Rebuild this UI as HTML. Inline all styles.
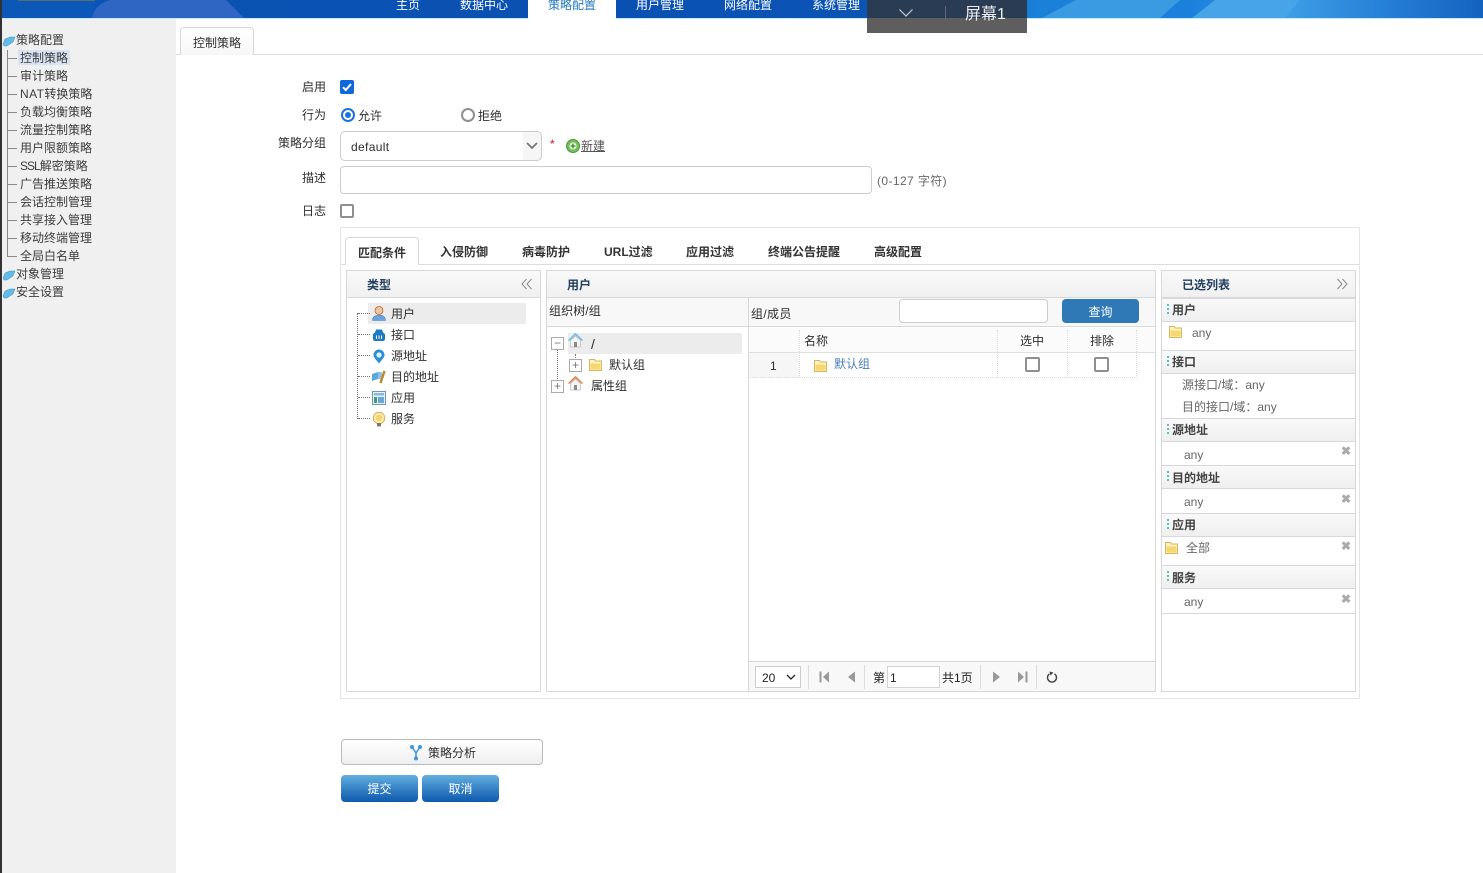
<!DOCTYPE html>
<html lang="zh"><head><meta charset="utf-8"><title>控制策略</title>
<style>
html,body{margin:0;padding:0;background:#fff}
body{width:1483px;height:873px;position:relative;overflow:hidden;font:12px/16px "Liberation Sans","Noto Sans CJK SC",sans-serif;color:#2e2e2e}
.a,.t{position:absolute}
.t{white-space:nowrap;line-height:16px;height:16px}
.b{box-sizing:border-box;position:absolute;border:1px solid #d8d8d8}
.nav{color:#fff;top:-3px}
.side{color:#3c3c3c;left:20px}
.hl{position:absolute;background:#888}
.tab{font-weight:700;color:#333;top:244px}
.head{background:linear-gradient(#f9f9f9,#f0f0f0);border-bottom:1px solid #d8d8d8;position:absolute;box-sizing:border-box}
.secth{position:absolute;left:1162px;width:193px;height:24px;box-sizing:border-box;background:linear-gradient(#f9f9f9,#efefef);border-top:1px solid #d8d8d8;border-bottom:1px solid #d8d8d8}
.secth span{position:absolute;left:10px;top:3px;font-weight:700;color:#444}
.secth i{position:absolute;left:5px;top:5px;width:2px;height:12px;background:repeating-linear-gradient(#5bbccb 0 2px,transparent 2px 4px)}
.ln{position:absolute;left:1162px;width:193px;height:1px;background:#d8d8d8}
.x{position:absolute;left:1341px;font-size:12px;line-height:10px;color:#aaa;font-weight:700}
.blue{position:absolute;box-sizing:border-box;height:27px;top:775px;border-radius:4px;background:linear-gradient(#62aedf,#0d59ad);color:#fff;text-align:center;line-height:28px;width:77px}
.cb{position:absolute;box-sizing:border-box;width:14px;height:14px;border:2px solid #8f8f8f;border-radius:2px;background:#fff}
.dot{position:absolute;border-color:#777;border-style:dotted;border-width:0}
.plus{position:absolute;box-sizing:border-box;width:13px;height:13px;border:1px solid #aaa;background:#fff;color:#777;font-size:12px;line-height:10px;text-align:center}
.sep{position:absolute;top:665px;width:1px;height:24px;background:#ddd}
.col{font-family:"Noto Sans CJK TC",sans-serif}
</style></head><body>

<!-- header -->
<div class="a" style="left:0;top:0;width:1483px;height:18px;background:linear-gradient(90deg,#0a55b4 0,#0a50b2 600px,#0b54b4 860px,#1a80d8 1040px,#1a80dc 1190px,#3c9de4 1290px,#2a84da 1370px,#1462c0 1483px);overflow:hidden">
<svg width="1483" height="18" style="position:absolute;left:0;top:0"><path d="M0 18V0H96L92 18Z" fill="#0c58b8"/><path d="M92 18C94 8 100 3 110 0H226L244 18Z" fill="#2f66c4"/><path d="M18 0H95V1H18Z" fill="#5a6a70"/><path d="M1042 18L1076 0H1180L1160 18Z" fill="#3a9ae2"/><path d="M1192 18L1215 0H1300L1285 18Z" fill="#48a4e8"/></svg></div>
<div class="a" style="left:0;top:18px;width:1483px;height:1px;background:#bfeefa"></div>
<div class="a" style="left:0;top:0;width:2px;height:873px;background:#333"></div>
<span class="t nav" style="left:396px">主页</span>
<span class="t nav" style="left:460px">数据中心</span>
<div class="a" style="left:528px;top:0;width:88px;height:19px;background:#fff"></div>
<span class="t nav" style="left:548px;color:#2478c0">策略配置</span>
<span class="t nav" style="left:636px">用户管理</span>
<span class="t nav" style="left:724px">网络配置</span>
<span class="t nav" style="left:812px">系统管理</span>
<div class="a" style="left:867px;top:0;width:160px;height:33px;background:#5e5e5e"></div>
<div class="a" style="left:867px;top:0;width:160px;height:18px;background:#2a3b54"></div>
<svg class="a" style="left:898px;top:8px" width="16" height="10"><path d="M1.500 1.500L8 8L14.500 1.500" fill="none" stroke="#c8ccd2" stroke-width="1.200"/></svg>
<div class="a" style="left:945px;top:6px;width:1px;height:14px;background:#667"></div>
<span class="t" style="left:965px;top:6px;font-size:16px;line-height:18px;height:18px;color:#eee">屏幕1</span>

<!-- sidebar -->
<div class="a" style="left:2px;top:19px;width:174px;height:854px;background:#f0f0f1"></div>
<svg class="a" style="left:2px;top:34px" width="14" height="280"><g fill="#62bde6" stroke="#3f8fb8" stroke-width=".5"><path d="M1 10L3 5L8 3H13L11 8L5 12H2Z"/><path d="M1 244L3 239L8 237H13L11 242L5 246H2Z"/><path d="M1 262L3 257L8 255H13L11 260L5 264H2Z"/></g></svg>
<span class="t" style="left:16px;top:32px;color:#3c3c3c">策略配置</span>
<div class="a" style="left:18px;top:50px;width:52px;height:15px;background:#d9e3f2"></div>
<div class="hl" style="left:7px;top:50px;width:1px;height:206px"></div>
<div>
<div class="hl" style="left:7px;top:58px;width:10px;height:1px"></div><div class="hl" style="left:7px;top:76px;width:10px;height:1px"></div><div class="hl" style="left:7px;top:94px;width:10px;height:1px"></div><div class="hl" style="left:7px;top:112px;width:10px;height:1px"></div><div class="hl" style="left:7px;top:130px;width:10px;height:1px"></div><div class="hl" style="left:7px;top:148px;width:10px;height:1px"></div><div class="hl" style="left:7px;top:166px;width:10px;height:1px"></div><div class="hl" style="left:7px;top:184px;width:10px;height:1px"></div><div class="hl" style="left:7px;top:202px;width:10px;height:1px"></div><div class="hl" style="left:7px;top:220px;width:10px;height:1px"></div><div class="hl" style="left:7px;top:238px;width:10px;height:1px"></div><div class="hl" style="left:7px;top:256px;width:10px;height:1px"></div>
</div>
<span class="t side" style="top:50px">控制策略</span>
<span class="t side" style="top:68px">审计策略</span>
<span class="t side" style="top:86px"><span style="letter-spacing:.4px">NAT</span>转换策略</span>
<span class="t side" style="top:104px">负载均衡策略</span>
<span class="t side" style="top:122px">流量控制策略</span>
<span class="t side" style="top:140px">用户限额策略</span>
<span class="t side" style="top:158px"><span style="letter-spacing:-1px">SSL</span>解密策略</span>
<span class="t side" style="top:176px">广告推送策略</span>
<span class="t side" style="top:194px">会话控制管理</span>
<span class="t side" style="top:212px">共享接入管理</span>
<span class="t side" style="top:230px">移动终端管理</span>
<span class="t side" style="top:248px">全局白名单</span>
<span class="t" style="left:16px;top:266px;color:#3c3c3c">对象管理</span>
<span class="t" style="left:16px;top:284px;color:#3c3c3c">安全设置</span>

<!-- page tab -->
<div class="a" style="left:176px;top:54px;width:1307px;height:1px;background:#ddd"></div>
<div class="a" style="left:180px;top:27px;width:74px;height:28px;box-sizing:border-box;border:1px solid #d8d8d8;border-bottom:0;border-radius:4px 4px 0 0;background:linear-gradient(#fff,#f7f7f7)"></div>
<span class="t" style="left:193px;top:35px">控制策略</span>

<!-- form -->
<span class="t" style="left:302px;top:79px">启用</span>
<div class="a" style="left:340px;top:80px;width:14px;height:14px;background:#0f67dc;border-radius:2px"><svg width="14" height="14"><path d="M3 7.200L5.800 10L11 4" fill="none" stroke="#fff" stroke-width="2"/></svg></div>
<span class="t" style="left:302px;top:107px">行为</span>
<div class="a" style="left:341px;top:108px;width:14px;height:14px;box-sizing:border-box;border:2px solid #1a73e0;border-radius:50%;background:#fff"><div class="a" style="left:2px;top:2px;width:6px;height:6px;border-radius:50%;background:#1a73e0"></div></div>
<span class="t" style="left:358px;top:108px">允许</span>
<div class="a" style="left:461px;top:108px;width:14px;height:14px;box-sizing:border-box;border:2px solid #8f8f8f;border-radius:50%;background:#fff"></div>
<span class="t" style="left:478px;top:108px">拒绝</span>
<span class="t" style="left:278px;top:135px">策略分组</span>
<div class="b" style="left:340px;top:131px;width:202px;height:30px;border-color:#ccc;border-radius:5px;background:linear-gradient(90deg,#fff 0 182px,#f6f6f6 182px)"></div>
<span class="t" style="left:351px;top:139px;letter-spacing:.35px">default</span>
<svg class="a" style="left:526px;top:142px" width="12" height="8"><path d="M1 1L6 6L11 1" fill="none" stroke="#777" stroke-width="1.800"/></svg>
<span class="t" style="left:550px;top:136px;color:#d0102a">*</span>
<svg class="a" style="left:566px;top:139px" width="14" height="14"><circle cx="7" cy="7" r="6.500" fill="#74bd58" stroke="#4a9a3a"/><circle cx="7" cy="7" r="3.600" fill="#f2faee"/><path d="M7 4.500v5M4.500 7h5" stroke="#4a9a3a" stroke-width="1.600"/></svg>
<span class="t" style="left:581px;top:138px;text-decoration:underline;color:#555">新建</span>
<span class="t" style="left:302px;top:170px">描述</span>
<div class="b" style="left:340px;top:166px;width:532px;height:28px;border-color:#ccc;border-radius:4px"></div>
<span class="t" style="left:877px;top:173px;color:#666;letter-spacing:.4px">(0-127 字符)</span>
<span class="t" style="left:302px;top:203px">日志</span>
<div class="cb" style="left:340px;top:204px"></div>

<!-- big panel -->
<div class="b" style="left:340px;top:227px;width:1020px;height:472px;border-color:#e4e4e4"></div>
<div class="a" style="left:341px;top:264px;width:1018px;height:1px;background:#ddd"></div>
<div class="a" style="left:345px;top:237px;width:74px;height:28px;box-sizing:border-box;border:1px solid #d8d8d8;border-bottom:0;border-radius:4px 4px 0 0;background:#fff"></div>
<span class="t tab" style="left:358px;top:245px">匹配条件</span>
<span class="t tab" style="left:440px">入侵防御</span>
<span class="t tab" style="left:522px">病毒防护</span>
<span class="t tab" style="left:604px">URL过滤</span>
<span class="t tab" style="left:686px">应用过滤</span>
<span class="t tab" style="left:768px">终端公告提醒</span>
<span class="t tab" style="left:874px">高级配置</span>

<!-- type panel -->
<div class="b" style="left:346px;top:270px;width:195px;height:422px"></div>
<div class="head" style="left:347px;top:271px;width:193px;height:27px"></div>
<span class="t" style="left:367px;top:277px;font-weight:700;color:#23405f">类型</span>
<svg class="a" style="left:521px;top:278px" width="12" height="12"><path d="M5.500 1L1 6L5.500 11M10.500 1L6 6L10.500 11" fill="none" stroke="#888" stroke-width="1"/></svg>
<div class="a" style="left:368px;top:303px;width:158px;height:21px;background:#ececec"></div>
<div class="dot" style="left:357px;top:313px;height:106px;border-left-width:1px"></div>
<div class="dot" style="left:358px;top:313px;width:12px;border-top-width:1px"></div>
<div class="dot" style="left:358px;top:334px;width:12px;border-top-width:1px"></div>
<div class="dot" style="left:358px;top:355px;width:12px;border-top-width:1px"></div>
<div class="dot" style="left:358px;top:376px;width:12px;border-top-width:1px"></div>
<div class="dot" style="left:358px;top:397px;width:12px;border-top-width:1px"></div>
<div class="dot" style="left:358px;top:418px;width:12px;border-top-width:1px"></div>
<svg class="a" style="left:372px;top:306px" width="14" height="15"><path d="M3 4.500C3 2 5 .5 7 .5S11 2 11 4.500C11 7 9 8.500 7 8.500S3 7 3 4.500Z" fill="#f0c49c" stroke="#b4693a" stroke-width=".8"/><path d="M.5 14.500C.5 10.500 4 9 7 9S13.500 10.500 13.500 14.500Z" fill="#6ca3dc" stroke="#4a7fb8" stroke-width=".6"/></svg>
<svg class="a" style="left:373px;top:329px" width="12" height="12"><path d="M3 .5H9L10 3.500C11.500 4 12 5 12 6V10C12 11 11 12 10 12H2C1 12 0 11 0 10V6C0 5 .5 4 2 3.500Z" fill="#1c7bc0"/><path d="M3.500 6.500v3.500M6 6.500v3.500M8.500 6.500v3.500" stroke="#fff"/></svg>
<svg class="a" style="left:373px;top:349px" width="12" height="15"><path d="M6 14.500C3 10.500 .5 8.500 .5 6A5.500 5.500 0 0 1 11.500 6C11.500 8.500 9 10.500 6 14.500Z" fill="#2a8fd8"/><circle cx="6" cy="6" r="2.600" fill="#e4f3fb"/></svg>
<svg class="a" style="left:372px;top:370px" width="14" height="14"><path d="M0 4L6 2V9L0 11Z" fill="#5aa8dc"/><path d="M6 2H10V9H6Z" fill="#8cc4e8"/><path d="M8.500 13L12.500 1" stroke="#b8862e" stroke-width="2.400"/></svg>
<svg class="a" style="left:372px;top:391px" width="14" height="14"><rect x=".5" y=".5" width="13" height="13" fill="#e9f2f8" stroke="#6d97b8"/><rect x="2" y="2" width="10" height="2.500" fill="#8db9d6"/><rect x="2" y="6" width="3" height="6" fill="#3f9e72"/><rect x="6" y="6" width="6" height="6" fill="#6aa7d8"/></svg>
<svg class="a" style="left:372px;top:412px" width="14" height="15"><circle cx="7" cy="6" r="5.800" fill="#fbe9a4" stroke="#c9a04c" stroke-width=".8"/><circle cx="7" cy="6" r="3" fill="#f4d36a"/><rect x="5" y="11" width="4" height="3.400" fill="#777"/></svg>
<span class="t" style="left:391px;top:306px">用户</span>
<span class="t" style="left:391px;top:327px">接口</span>
<span class="t" style="left:391px;top:348px">源地址</span>
<span class="t" style="left:391px;top:369px">目的地址</span>
<span class="t" style="left:391px;top:390px">应用</span>
<span class="t" style="left:391px;top:411px">服务</span>

<!-- user panel -->
<div class="b" style="left:546px;top:270px;width:610px;height:422px"></div>
<div class="head" style="left:547px;top:271px;width:608px;height:27px"></div>
<span class="t" style="left:567px;top:277px;font-weight:700;color:#23405f">用户</span>
<div class="a" style="left:748px;top:298px;width:1px;height:393px;background:#d8d8d8"></div>
<div class="a" style="left:547px;top:298px;width:201px;height:29px;background:#f8f8f8;border-bottom:1px solid #d8d8d8;box-sizing:border-box"></div>
<span class="t" style="left:549px;top:303px;letter-spacing:.1px">组织树/组</span>
<div class="a" style="left:749px;top:298px;width:406px;height:29px;background:#f8f8f8;border-bottom:1px solid #d8d8d8;box-sizing:border-box"></div>
<span class="t" style="left:751px;top:306px;letter-spacing:.35px">组/成员</span>
<div class="b" style="left:899px;top:299px;width:149px;height:24px;border-color:#ccc;border-radius:4px;background:#fff"></div>
<div class="a" style="left:1062px;top:299px;width:77px;height:24px;border-radius:4px;background:#2f79b7;color:#fff;text-align:center;line-height:26px">查询</div>
<!-- tree -->
<div class="a" style="left:568px;top:333px;width:174px;height:21px;background:#ececec"></div>
<div class="dot" style="left:557px;top:345px;height:36px;border-left-width:1px"></div>
<div class="dot" style="left:575px;top:354px;height:6px;border-left-width:1px"></div>
<div class="plus" style="left:551px;top:337px">−</div>
<div class="plus" style="left:569px;top:359px">+</div>
<div class="plus" style="left:551px;top:380px">+</div>
<svg class="a" style="left:568px;top:333px" width="15" height="15"><path d="M.5 7.500L7.500 .8L14.500 7.500" fill="#9fd6ef" stroke="#70bde0" stroke-width="1.400"/><path d="M2.500 7.500V14H12.500V7.500L7.500 3Z" fill="#f4f4f4" stroke="#bbb" stroke-width=".7"/><rect x="6" y="9" width="3" height="5" fill="#8a8a8a"/></svg>
<svg class="a" style="left:568px;top:376px" width="15" height="15"><path d="M.5 7.500L7.500 .8L14.500 7.500" fill="#f2a877" stroke="#d98a56" stroke-width="1.400"/><path d="M2.500 7.500V14H12.500V7.500L7.500 3Z" fill="#f4f4f4" stroke="#bbb" stroke-width=".7"/><rect x="6" y="9" width="3" height="5" fill="#8a8a8a"/></svg>
<svg class="a" style="left:589px;top:359px" width="13" height="12"><path d="M.5 .5H5.500L6.500 2H12.500V11.500H.5Z" fill="#fdf1c0" stroke="#d8b65a"/><rect x="1.500" y="4.500" width="10" height="6" fill="#f6d873"/></svg>
<span class="t" style="left:591px;top:336px;font-size:14px">/</span>
<span class="t" style="left:609px;top:357px">默认组</span>
<span class="t" style="left:591px;top:378px">属性组</span>
<!-- grid -->
<div class="a" style="left:749px;top:328px;width:406px;height:25px;background:#fbfbfb;border-bottom:1px solid #e0e0e0;box-sizing:border-box"></div>
<div class="a" style="left:749px;top:353px;width:50px;height:25px;background:#f6f6f6"></div>
<div class="a" style="left:749px;top:377px;width:388px;height:0;border-top:1px dotted #ddd"></div>
<div class="dot" style="left:799px;top:330px;height:48px;border-left-width:1px;border-color:#ddd"></div>
<div class="dot" style="left:997px;top:330px;height:48px;border-left-width:1px;border-color:#ddd"></div>
<div class="dot" style="left:1067px;top:330px;height:48px;border-left-width:1px;border-color:#ddd"></div>
<div class="dot" style="left:1136px;top:330px;height:48px;border-left-width:1px;border-color:#ddd"></div>
<span class="t" style="left:804px;top:333px">名称</span>
<span class="t" style="left:1020px;top:333px">选中</span>
<span class="t" style="left:1090px;top:333px">排除</span>
<span class="t" style="left:770px;top:358px">1</span>
<svg class="a" style="left:814px;top:360px" width="13" height="12"><path d="M.5 .5H5.500L6.500 2H12.500V11.500H.5Z" fill="#fdf1c0" stroke="#d8b65a"/><rect x="1.500" y="4.500" width="10" height="6" fill="#f6d873"/></svg>
<span class="t" style="left:834px;top:356px;color:#4a7fb5">默认组</span>
<div class="cb" style="left:1025px;top:357px;width:15px;height:15px"></div>
<div class="cb" style="left:1094px;top:357px;width:15px;height:15px"></div>
<!-- pager -->
<div class="a" style="left:749px;top:661px;width:406px;height:30px;background:#f8f8f8;border-top:1px solid #d8d8d8;box-sizing:border-box"></div>
<div class="b" style="left:755px;top:666px;width:46px;height:22px;border-color:#ccc;background:#fff"></div>
<span class="t" style="left:762px;top:670px;color:#222">20</span>
<svg class="a" style="left:786px;top:674px" width="10" height="7"><path d="M1 1L5 5L9 1" fill="none" stroke="#222" stroke-width="1.300"/></svg>
<div class="sep" style="left:808px"></div><div class="sep" style="left:864px"></div><div class="sep" style="left:980px"></div><div class="sep" style="left:1036px"></div>
<svg class="a" style="left:819px;top:671px" width="12" height="12"><path d="M1.500 .5v11" stroke="#999" stroke-width="2"/><path d="M10 .5V11.500L4 6Z" fill="#999"/></svg>
<svg class="a" style="left:845px;top:671px" width="12" height="12"><path d="M10 .5V11.500L3 6Z" fill="#999"/></svg>
<span class="t" style="left:873px;top:670px;color:#222">第</span>
<div class="b" style="left:887px;top:666px;width:53px;height:22px;border-color:#d4d4d4;background:#fff"></div>
<span class="t" style="left:890px;top:670px;color:#222">1</span>
<span class="t" style="left:942px;top:670px;color:#222">共1页</span>
<svg class="a" style="left:990px;top:671px" width="12" height="12"><path d="M3 .5V11.500L10 6Z" fill="#999"/></svg>
<svg class="a" style="left:1016px;top:671px" width="12" height="12"><path d="M2 .5V11.500L8 6Z" fill="#999"/><path d="M10.500 .5v11" stroke="#999" stroke-width="2"/></svg>
<svg class="a" style="left:1046px;top:671px" width="12" height="12"><path d="M3.500 2.800A4.500 4.500 0 1 0 8.500 2.800" fill="none" stroke="#444" stroke-width="1.400"/><path d="M3.500 .5L7.500 1.500L4.500 4.500Z" fill="#444"/></svg>

<!-- selected list -->
<div class="b" style="left:1161px;top:270px;width:195px;height:422px"></div>
<div class="head" style="left:1162px;top:271px;width:193px;height:27px"></div>
<span class="t" style="left:1182px;top:277px;font-weight:700;color:#23405f">已选列表</span>
<svg class="a" style="left:1336px;top:278px" width="12" height="12"><path d="M1.500 1L6 6L1.500 11M6.500 1L11 6L6.500 11" fill="none" stroke="#888" stroke-width="1"/></svg>
<div class="secth" style="top:298px"><i></i><span>用户</span></div>
<svg class="a" style="left:1169px;top:326px" width="13" height="12"><path d="M.5 .5H5.500L6.500 2H12.500V11.500H.5Z" fill="#fdf1c0" stroke="#d8b65a"/><rect x="1.500" y="4.500" width="10" height="6" fill="#f6d873"/></svg>
<span class="t" style="left:1192px;top:325px;color:#666">any</span>
<div class="secth" style="top:350px"><i></i><span>接口</span></div>
<span class="t" style="left:1182px;top:377px;color:#666">源接口/域<span class="col">：</span>any</span>
<span class="t" style="left:1182px;top:399px;color:#666">目的接口/域<span class="col">：</span>any</span>
<div class="secth" style="top:418px"><i></i><span>源地址</span></div>
<span class="t" style="left:1184px;top:447px;color:#666">any</span>
<span class="x" style="top:446px">✖</span>
<div class="secth" style="top:465px"><i></i><span style="top:4px">目的地址</span></div>
<span class="t" style="left:1184px;top:494px;color:#666">any</span>
<span class="x" style="top:494px">✖</span>
<div class="secth" style="top:513px"><i></i><span>应用</span></div>
<svg class="a" style="left:1165px;top:542px" width="13" height="12"><path d="M.5 .5H5.500L6.500 2H12.500V11.500H.5Z" fill="#fdf1c0" stroke="#d8b65a"/><rect x="1.500" y="4.500" width="10" height="6" fill="#f6d873"/></svg>
<span class="t" style="left:1186px;top:540px;color:#666">全部</span>
<span class="x" style="top:541px">✖</span>
<div class="secth" style="top:565px"><i></i><span style="top:4px">服务</span></div>
<span class="t" style="left:1184px;top:594px;color:#666">any</span>
<span class="x" style="top:594px">✖</span>
<div class="ln" style="top:613px"></div>

<!-- buttons -->
<div class="a" style="left:341px;top:739px;width:202px;height:26px;box-sizing:border-box;border:1px solid #bbb;border-radius:4px;background:linear-gradient(#fff,#efefef)"></div>
<svg class="a" style="left:409px;top:744px" width="14" height="17"><path d="M3 3L7 9L11 3M7 9V14" fill="none" stroke="#3d97e0" stroke-width="1.500"/><circle cx="3" cy="3" r="2" fill="#3d97e0"/><circle cx="11" cy="3" r="2" fill="#3d97e0"/><circle cx="7" cy="14.500" r="2" fill="#3d97e0"/></svg>
<span class="t" style="left:428px;top:745px">策略分析</span>
<div class="blue" style="left:341px">提交</div>
<div class="blue" style="left:422px">取消</div>
</body></html>
